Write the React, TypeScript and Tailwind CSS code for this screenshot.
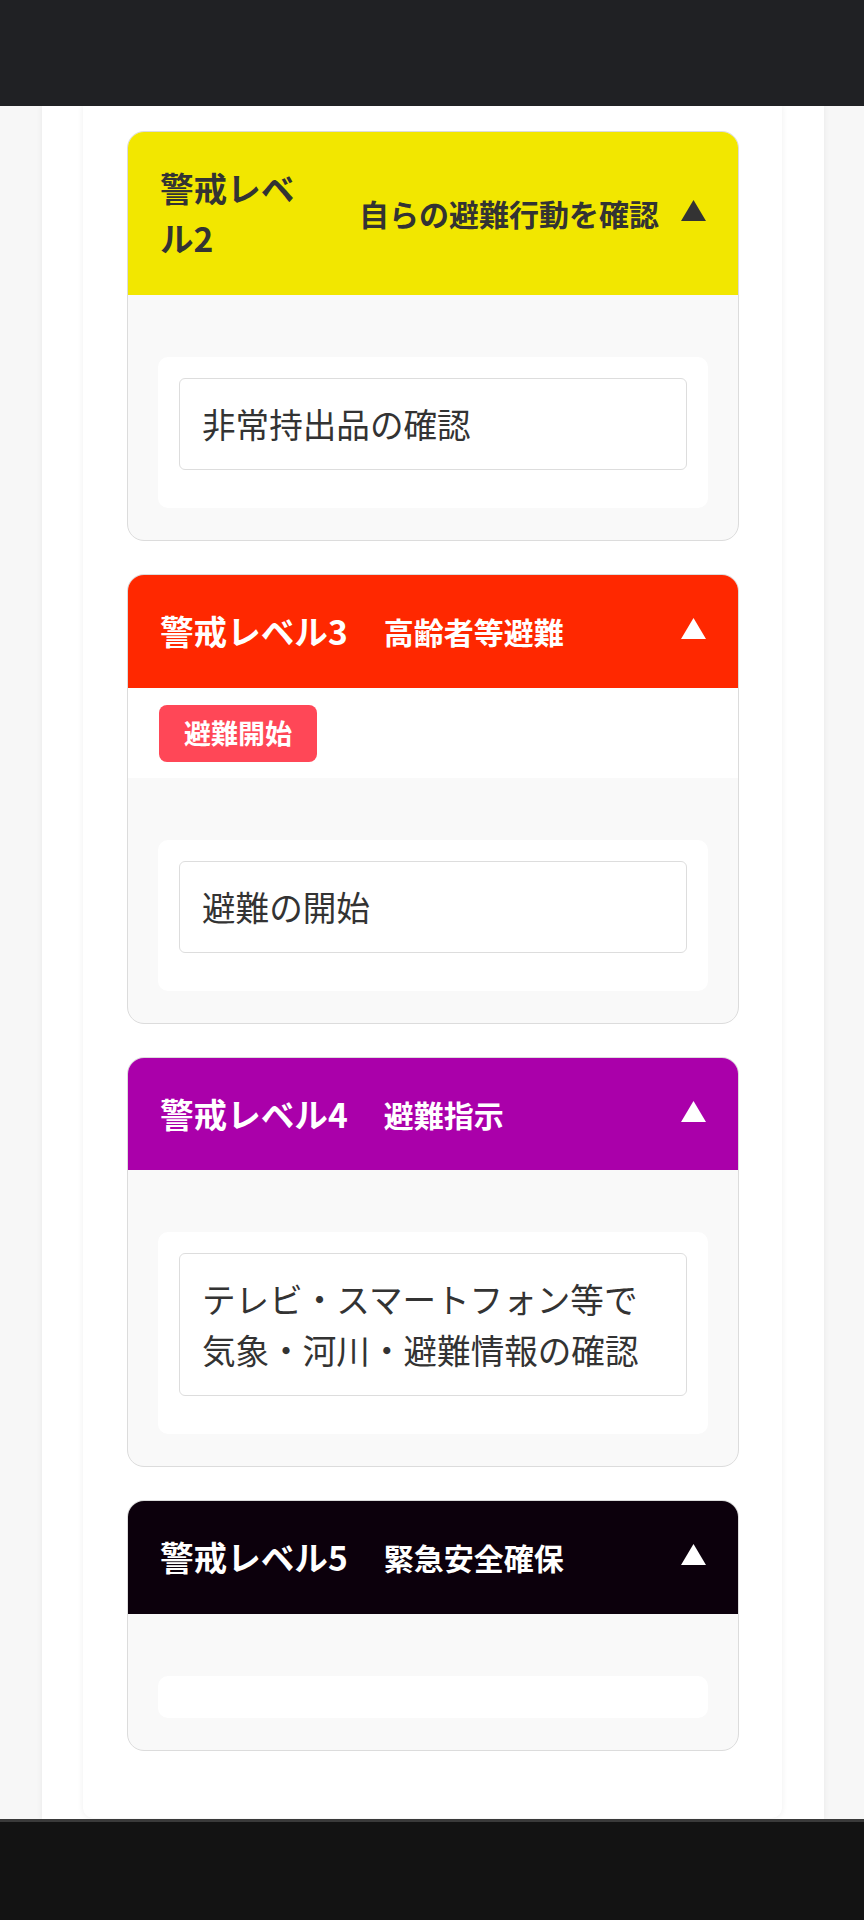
import React from "react";

type Level = {
  title: string;
  subtitle: string;
  bg: string;
  dark: boolean;
  badge?: string;
  text?: string;
};

const levels: Level[] = [
  { title: "警戒レベル2", subtitle: "自らの避難行動を確認", bg: "bg-[#f2e700]", dark: true, text: "非常持出品の確認" },
  { title: "警戒レベル3", subtitle: "高齢者等避難", bg: "bg-[#ff2800]", dark: false, badge: "避難開始", text: "避難の開始" },
  { title: "警戒レベル4", subtitle: "避難指示", bg: "bg-[#aa00aa]", dark: false, text: "テレビ・スマートフォン等で気象・河川・避難情報の確認" },
  { title: "警戒レベル5", subtitle: "緊急安全確保", bg: "bg-[#0c000c]", dark: false },
];

function Triangle({ dark }: { dark: boolean }) {
  return (
    <svg width="25" height="21" viewBox="0 0 25 21" className="block">
      <polygon points="12.5,0 25,21 0,21" fill={dark ? "#333333" : "#ffffff"} />
    </svg>
  );
}

function Card({ l }: { l: Level }) {
  const tc = l.dark ? "text-[#333333]" : "text-white";
  return (
    <div className="w-[612px] ml-[44px] mb-[33px] border border-[#dcdcdc] rounded-[17px] overflow-hidden bg-[#f9f9f9]">
      <div className={`${l.bg} ${tc} flex items-center px-[32px] py-[31px]`}>
        <div className="font-bold text-[33.6px] leading-[50.4px] min-w-0">{l.title}</div>
        <div className="ml-[36px] shrink-0 whitespace-nowrap font-bold text-[30px] leading-[50.4px]">{l.subtitle}</div>
        <div className="ml-auto pl-[22px] shrink-0 mb-[5px]">
          <Triangle dark={l.dark} />
        </div>
      </div>
      {l.badge && (
        <div className="bg-white px-[31px] pt-[17px] pb-[16px] flex">
          <div className="h-[57px] px-[25px] rounded-[8px] bg-[#ff4757] text-white font-bold text-[27px] flex items-center">
            {l.badge}
          </div>
        </div>
      )}
      <div className="px-[30px] pt-[62px] pb-[32px]">
        <div className="bg-white rounded-[10px] p-[21px]">
          {l.text && (
            <div className="border border-[#dddddd] rounded-[6px] px-[22px] py-[20px] mb-[17px] text-[33.6px] leading-[50.4px] text-[#333333]">
              {l.text}
            </div>
          )}
        </div>
      </div>
    </div>
  );
}

export default function App() {
  return (
    <div
      className="w-[864px] h-[1920px] overflow-hidden flex flex-col bg-[#f7f7f7]"
      style={{ fontFamily: '"Noto Sans CJK JP", "Noto Sans", Roboto, sans-serif' }}
    >
      <div className="h-[106px] shrink-0 bg-[#202124]" />
      <div className="h-[1713px] shrink-0 overflow-hidden">
        <div className="w-[782px] ml-[42px] h-full bg-white shadow-[0_0_6px_rgba(0,0,0,0.07)]">
          <div className="w-[699px] ml-[41px] bg-white shadow-[0_0_6px_rgba(0,0,0,0.07)] rounded-b-[10px] pt-[25px] pb-[34px]">
            {levels.map((l, i) => (
              <Card key={i} l={l} />
            ))}
          </div>
        </div>
      </div>
      <div className="flex-1 bg-[#131313] border-t-[3px] border-[#3a3a3a]" />
    </div>
  );
}
